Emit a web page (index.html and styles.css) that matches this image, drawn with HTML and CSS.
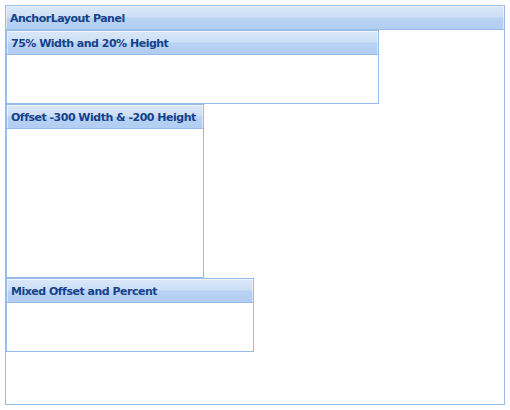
FILE: index.html
```html
<!DOCTYPE html>
<html>
<head>
<meta charset="utf-8">
<link rel="stylesheet" href="styles.css">
</head>
<body>
<div class="panel outer">
  <div class="hd">AnchorLayout Panel</div>
  <div class="bd">
    <div class="panel p1">
      <div class="hd">75% Width and 20% Height</div>
      <div class="bd"></div>
    </div>
    <div class="panel p2">
      <div class="hd">Offset -300 Width &amp; -200 Height</div>
      <div class="bd"></div>
    </div>
    <div class="panel p3">
      <div class="hd">Mixed Offset and Percent</div>
      <div class="bd"></div>
    </div>
  </div>
</div>
</body>
</html>
```
FILE: styles.css
```css
* { box-sizing: border-box; }
html, body { background: #fff; }
body { margin: 5px; }
.panel { display: flex; flex-direction: column; }
.outer { width: 500px; height: 400px; }
.hd {
  flex: none;
  height: 25px;
  border: 1px solid #99bbe8;
  padding: 2px 0 0 4px;
  font: bold 11px/22px "DejaVu Sans", Verdana, sans-serif;
  letter-spacing: -0.5px;
  color: #15428b;
  white-space: nowrap;
  overflow: hidden;
  background: linear-gradient(#dae8f8 0%, #cddff6 48%, #b9d3f4 52%, #b1cdf2 100%);
  box-shadow: inset 1px 1px 0 rgba(255,255,255,0.5), inset -1px 0 0 rgba(255,255,255,0.5);
}
.bd {
  flex: 1;
  border: 1px solid #99bbe8;
  border-top: 0;
  background: #fff;
}
.outer > .bd { display: flex; flex-direction: column; align-items: flex-start; }
.p1 { width: 373px; height: 74px; }
.p2 { width: calc(100% - 300px); height: 174px; }
.p3 { width: calc(100% - 250px); height: 74px; }
```
